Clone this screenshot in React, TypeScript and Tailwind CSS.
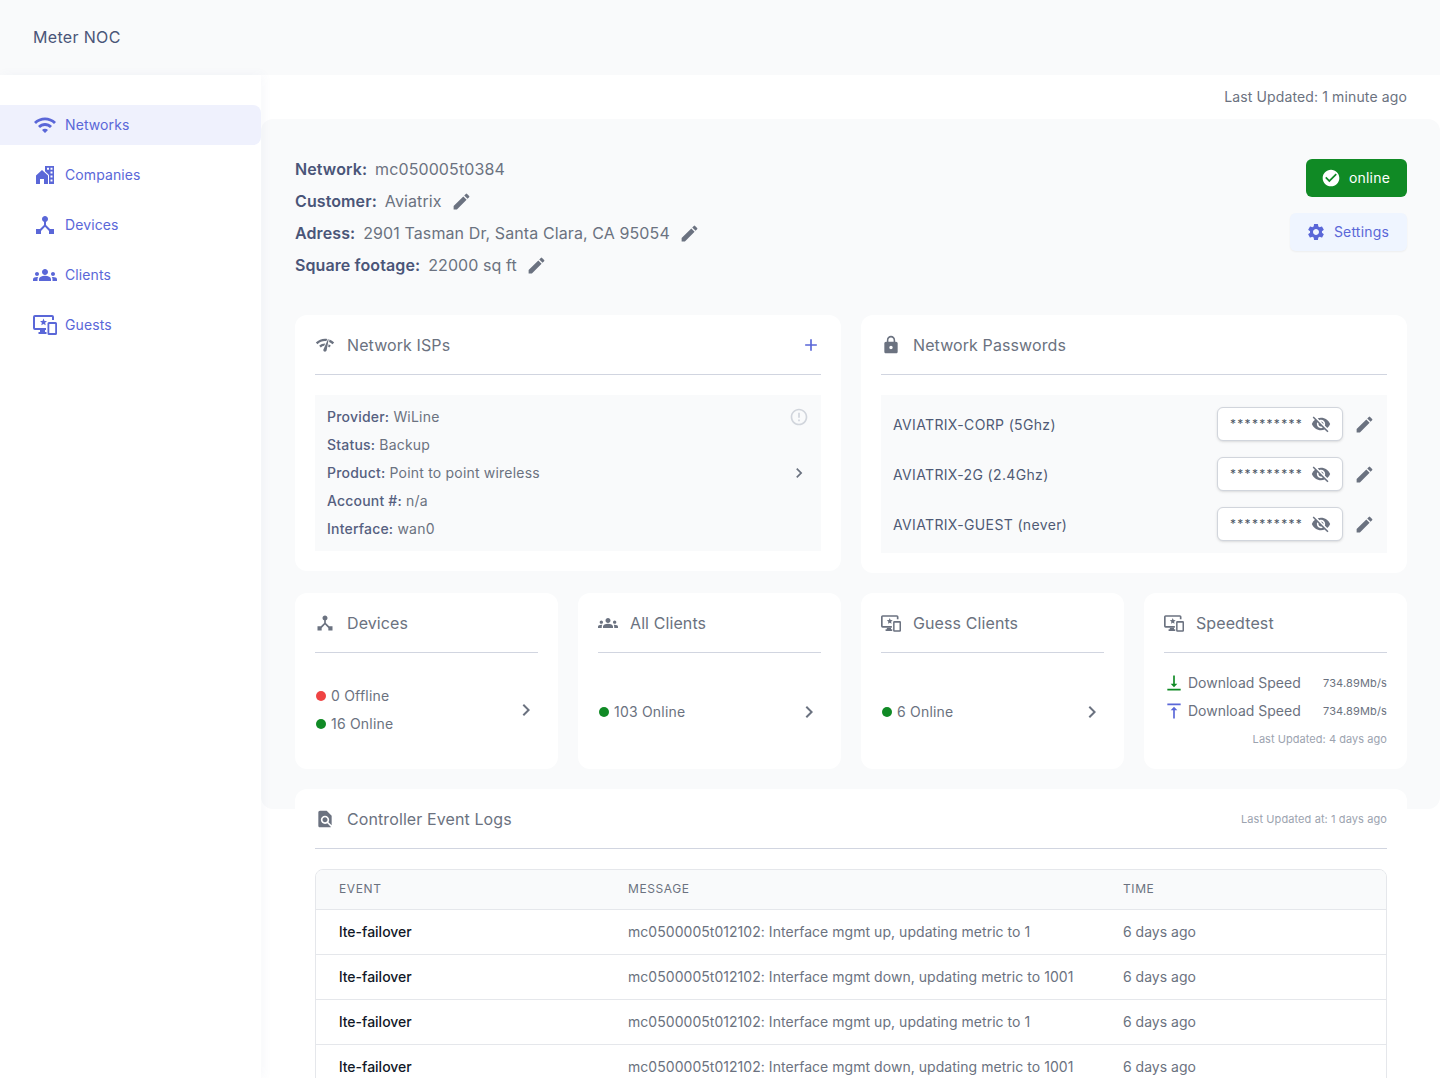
import type { ReactNode } from "react"
import {
  MdAdd,
  MdCheckCircle,
  MdChevronRight,
  MdDeviceHub,
  MdEdit,
  MdErrorOutline,
  MdFindInPage,
  MdGroups,
  MdLock,
  MdNetworkCheck,
  MdSettings,
  MdVerticalAlignBottom,
  MdVerticalAlignTop,
  MdVisibilityOff,
  MdWifi,
} from "react-icons/md"

function GuestsIcon({ className }: { className?: string }) {
  return (
    <svg viewBox="0 0 24 20" fill="currentColor" className={className}>
      <path d="M2 0h17a2 2 0 0 1 2 2v3h-2V2H2v11h11v2H2a2 2 0 0 1-2-2V2a2 2 0 0 1 2-2z" />
      <path d="M7 15h5v2h1.500v2H5.500v-2H7z" />
      <path d="M10.500 3.500l1 2.400 2.500.2-1.900 1.700.6 2.500-2.200-1.300-2.200 1.300.6-2.500L7 6.100l2.500-.2z" />
      <path
        fillRule="evenodd"
        d="M16 7h6.500A1.500 1.500 0 0 1 24 8.500v10a1.500 1.500 0 0 1-1.500 1.500H16a1.500 1.500 0 0 1-1.500-1.500v-10A1.500 1.500 0 0 1 16 7zm.300 2v9h5.900V9z"
      />
    </svg>
  )
}

function CompaniesIcon({ className }: { className?: string }) {
  return (
    <svg viewBox="0 0 18 18" fill="currentColor" className={className}>
      <path d="M0 18V9.500L6 4l6 5.500V18H8v-5H4v5z" />
      <path
        fillRule="evenodd"
        d="M9 0h9v18h-5V9L9 5.300zm2 1.800v2h2v-2zm3.500 0v2h2v-2zm0 3.800v2h2v-2zm0 4v2h2v-2zm0 4v2h2v-2z"
      />
    </svg>
  )
}

const navItems = [
  { label: "Networks", icon: <MdWifi className="h-6 w-6" />, active: true },
  { label: "Companies", icon: <CompaniesIcon className="h-[18px] w-[18px]" /> },
  { label: "Devices", icon: <MdDeviceHub className="h-6 w-6" /> },
  { label: "Clients", icon: <MdGroups className="h-6 w-6" /> },
  { label: "Guests", icon: <GuestsIcon className="h-5 w-6" /> },
]

const logRows = [
  "mc0500005t012102: Interface mgmt up, updating metric to 1",
  "mc0500005t012102: Interface mgmt down, updating metric to 1001",
  "mc0500005t012102: Interface mgmt up, updating metric to 1",
  "mc0500005t012102: Interface mgmt down, updating metric to 1001",
]

function Sidebar() {
  return (
    <aside className="z-10 w-[261px] shrink-0 bg-white pt-[30px] shadow-[2px_0_10px_rgba(79,90,160,0.05)]">
      <nav className="flex flex-col gap-[10px]">
        {navItems.map((item) => (
          <a
            key={item.label}
            className={
              item.active
                ? "flex h-10 items-center rounded-r-lg bg-[#eff1fd] text-sm tracking-[0.1px] text-[#5a67d8]"
                : "flex h-10 items-center text-sm tracking-[0.1px] text-[#5a67d8]"
            }
          >
            <span className="flex w-[65px] justify-center pl-[25px]">{item.icon}</span>
            {item.label}
          </a>
        ))}
      </nav>
    </aside>
  )
}

function InfoRow({ label, value, editable }: { label: string; value: string; editable?: boolean }) {
  return (
    <div className="flex h-8 items-center text-base tracking-[0.1px]">
      <span className="mr-2 font-semibold text-[#4a5578]">{label}</span>
      <span className="text-[#6b7280]">{value}</span>
      {editable && <MdEdit className="ml-[9px] h-[21px] w-[21px] text-[#6b7280]" />}
    </div>
  )
}

function CardHeader({ icon, title, right }: { icon: ReactNode; title: string; right?: ReactNode }) {
  return (
    <div className="flex h-10 items-start justify-between border-b border-[#d1d5e0]">
      <div className="flex h-5 items-center text-base tracking-[0.1px] text-[#6b7280]">
        <span className="flex w-8 items-center text-[#6b7280]">{icon}</span>
        {title}
      </div>
      {right}
    </div>
  )
}

function IspLine({ label, value, right }: { label: string; value: string; right?: ReactNode }) {
  return (
    <div className="flex h-7 items-center justify-between text-sm tracking-[0.2px]">
      <div>
        <span className="font-medium text-[#556080]">{label}</span>{" "}
        <span className="text-[#6b7280]">{value}</span>
      </div>
      {right}
    </div>
  )
}

function PasswordRow({ name }: { name: string }) {
  return (
    <div className="flex h-[34px] items-center justify-between">
      <span className="pt-[2px] text-sm tracking-[0.35px] text-[#4f5a75]">{name}</span>
      <div className="flex items-center">
        <div className="flex h-[34px] w-[126px] items-center justify-between rounded-md border border-gray-300 bg-white pl-3 pr-[11px] shadow-sm">
          <span className="text-xs tracking-[1.3px] text-[#4b5563]">**********</span>
          <MdVisibilityOff className="h-5 w-5 text-[#6b7280]" />
        </div>
        <MdEdit className="ml-[11px] h-[21px] w-[21px] text-[#6b7280]" />
      </div>
    </div>
  )
}

function StatusLine({ color, text }: { color: string; text: string }) {
  return (
    <div className="ml-px flex h-7 items-center text-sm tracking-[0.2px] text-[#6b7280]">
      <span className={`mr-[5px] h-[10px] w-[10px] rounded-full ${color}`} />
      {text}
    </div>
  )
}

function StatCard({
  icon,
  title,
  shift,
  children,
}: {
  icon: ReactNode
  title: string
  shift?: string
  children: ReactNode
}) {
  return (
    <section className="h-[176px] rounded-xl bg-white p-5">
      <CardHeader icon={icon} title={title} />
      <div className={`mt-5 flex h-[76px] items-center justify-between ${shift ?? ""}`}>{children}</div>
    </section>
  )
}

function SpeedRow({ icon }: { icon: ReactNode }) {
  return (
    <div className="flex h-7 items-center justify-between">
      <div className="flex items-center text-sm text-[#6b7280]">
        {icon}
        Download Speed
      </div>
      <span className="text-[11px] tracking-[0.15px] text-[#6b7280]">734.89Mb/s</span>
    </div>
  )
}

export default function App() {
  return (
    <div className="flex h-[1078px] flex-col overflow-hidden bg-white font-['Inter',sans-serif]">
      <header className="flex h-[75px] shrink-0 items-center bg-[#f9fafb] pb-[2px] pl-[33px] text-base tracking-[0.33px] text-[#4a5578]">
        Meter NOC
      </header>
      <div className="flex min-h-0 flex-1">
        <Sidebar />
        <main className="min-w-0 flex-1">
          <div className="flex h-11 items-center justify-end pr-[33px] text-sm tracking-[0.13px] text-[#6b7280]">
            Last Updated: 1 minute ago
          </div>
          <div className="h-[690px] rounded-xl bg-[#f9fafb] pl-[34px] pr-[33px] pt-[34px]">
            <div className="flex h-[162px] items-start justify-between">
              <div>
                <InfoRow label="Network:" value="mc050005t0384" />
                <InfoRow label="Customer:" value="Aviatrix" editable />
                <InfoRow label="Adress:" value="2901 Tasman Dr, Santa Clara, CA 95054" editable />
                <InfoRow label="Square footage:" value="22000 sq ft" editable />
              </div>
              <div className="flex flex-col items-end gap-[16px] pt-[6px]">
                <div className="flex h-[38px] w-[101px] items-center justify-center rounded-md bg-[#108a25] pr-[2px] text-sm tracking-[0.2px] text-white">
                  <MdCheckCircle className="mr-2 h-5 w-5" />
                  online
                </div>
                <div className="flex h-[38px] w-[117px] items-center justify-center rounded-md bg-[#eff5ff] pr-[2px] text-sm tracking-[0.2px] text-[#5a67d8] shadow-xs">
                  <MdSettings className="mr-2 h-5 w-5" />
                  Settings
                </div>
              </div>
            </div>

            <div className="grid grid-cols-2 items-start gap-5">
              <section className="rounded-xl bg-white p-5">
                <CardHeader
                  icon={<MdNetworkCheck className="h-5 w-5" />}
                  title="Network ISPs"
                  right={<MdAdd className="h-5 w-5 text-[#5a67d8]" />}
                />
                <div className="mt-5 bg-[#f9fafb] px-3 py-2">
                  <IspLine
                    label="Provider:"
                    value="WiLine"
                    right={<MdErrorOutline className="h-5 w-5 text-gray-300" />}
                  />
                  <IspLine label="Status:" value="Backup" />
                  <IspLine
                    label="Product:"
                    value="Point to point wireless"
                    right={<MdChevronRight className="h-5 w-5 text-[#6b7280]" />}
                  />
                  <IspLine label="Account #:" value="n/a" />
                  <IspLine label="Interface:" value="wan0" />
                </div>
              </section>
              <section className="rounded-xl bg-white p-5">
                <CardHeader icon={<MdLock className="h-5 w-5" />} title="Network Passwords" />
                <div className="mt-5 flex flex-col gap-4 bg-[#f9fafb] px-3 py-3">
                  <PasswordRow name="AVIATRIX-CORP (5Ghz)" />
                  <PasswordRow name="AVIATRIX-2G (2.4Ghz)" />
                  <PasswordRow name="AVIATRIX-GUEST (never)" />
                </div>
              </section>
            </div>

            <div className="mt-5 grid grid-cols-4 gap-5">
              <StatCard icon={<MdDeviceHub className="h-5 w-5" />} title="Devices" shift="pb-[2px]">
                <div>
                  <StatusLine color="bg-[#ef4444]" text="0 Offline" />
                  <StatusLine color="bg-[#108a25]" text="16 Online" />
                </div>
                <MdChevronRight className="h-6 w-6 text-[#6b7280]" />
              </StatCard>
              <StatCard icon={<MdGroups className="h-5 w-5" />} title="All Clients" shift="pt-[2px]">
                <StatusLine color="bg-[#108a25]" text="103 Online" />
                <MdChevronRight className="h-6 w-6 text-[#6b7280]" />
              </StatCard>
              <StatCard icon={<GuestsIcon className="h-[17px] w-5" />} title="Guess Clients" shift="pt-[2px]">
                <StatusLine color="bg-[#108a25]" text="6 Online" />
                <MdChevronRight className="h-6 w-6 text-[#6b7280]" />
              </StatCard>
              <StatCard icon={<GuestsIcon className="h-[17px] w-5" />} title="Speedtest">
                <div className="w-full">
                  <SpeedRow icon={<MdVerticalAlignBottom className="mr-[4px] h-5 w-5 text-[#108a25]" />} />
                  <SpeedRow icon={<MdVerticalAlignTop className="mr-[4px] h-5 w-5 text-[#5a67d8]" />} />
                  <div className="flex h-7 items-center justify-end text-[11px] tracking-[0.05px] text-[#9ca3af]">
                    Last Updated: 4 days ago
                  </div>
                </div>
              </StatCard>
            </div>

            <section className="mt-5 rounded-xl bg-white p-5">
              <CardHeader
                icon={<MdFindInPage className="h-5 w-5" />}
                title="Controller Event Logs"
                right={
                  <span className="text-[11px] leading-5 tracking-[0.1px] text-[#9ca3af]">
                    Last Updated at: 1 days ago
                  </span>
                }
              />
              <div className="mt-5 overflow-hidden rounded-lg border border-gray-200">
                <table className="w-full table-fixed text-left text-sm">
                  <thead>
                    <tr className="h-[39px] bg-[#f9fafb] text-xs uppercase tracking-wider text-[#6b7280]">
                      <th className="w-[312px] pl-[23px] font-normal">Event</th>
                      <th className="w-[495px] font-normal">Message</th>
                      <th className="font-normal">Time</th>
                    </tr>
                  </thead>
                  <tbody>
                    {logRows.map((message, i) => (
                      <tr key={i} className="h-[45px] border-t border-gray-200">
                        <td className="pl-[23px] font-medium text-[#111827]">lte-failover</td>
                        <td className="tracking-[0.04px] text-[#6b7280]">{message}</td>
                        <td className="text-[#6b7280]">6 days ago</td>
                      </tr>
                    ))}
                  </tbody>
                </table>
              </div>
            </section>
          </div>
        </main>
      </div>
    </div>
  )
}
